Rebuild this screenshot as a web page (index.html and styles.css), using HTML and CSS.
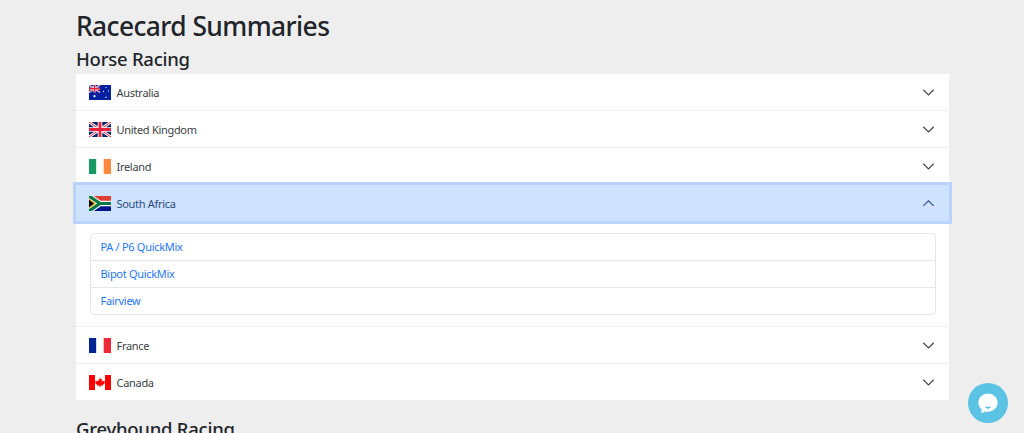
FILE: index.html
```html
<!DOCTYPE html>
<html lang="en">
<head>
<meta charset="utf-8">
<title>Racecard Summaries</title>
<link rel="stylesheet" href="styles.css">
</head>
<body>
<main class="container">
  <h1 class="title">Racecard Summaries</h1>
  <h2 class="section">Horse Racing</h2>
  <div class="accordion">
    <div class="item">
      <div class="head">
        <svg class="flag" viewBox="0 0 22 15" preserveAspectRatio="none"><rect width="22" height="15" fill="#00209f"/><path d="M0 0L11 7.500M11 0L0 7.500" stroke="#fff" stroke-width="1.500"/><path d="M0 0L11 7.500M11 0L0 7.500" stroke="#e0243c" stroke-width=".6"/><path d="M5.500 0V7.500M0 3.750H11" stroke="#fff" stroke-width="2.200"/><path d="M5.500 0V7.500M0 3.750H11" stroke="#e8203c" stroke-width="1.300"/><circle cx="5.500" cy="11.200" r="1.100" fill="#fff"/><circle cx="17" cy="2.500" r=".6" fill="#fff"/><circle cx="14.500" cy="6.300" r=".6" fill="#fff"/><circle cx="19.500" cy="5.800" r=".6" fill="#fff"/><circle cx="17" cy="12.300" r=".7" fill="#fff"/></svg>
        <span class="name">Australia</span>
        <svg class="chev" viewBox="0 0 16 16"><path d="M1.600 4.600L8 11l6.400-6.400"/></svg>
      </div>
    </div>
    <div class="item">
      <div class="head">
        <svg class="flag" viewBox="0 0 22 15" preserveAspectRatio="none"><rect width="22" height="15" fill="#012169"/><path d="M0 0L22 15M22 0L0 15" stroke="#fff" stroke-width="2.800"/><path d="M0 0L22 15M22 0L0 15" stroke="#e8203c" stroke-width="1"/><path d="M11 0V15M0 7.500H22" stroke="#fff" stroke-width="4.600"/><path d="M11 0V15M0 7.500H22" stroke="#e8203c" stroke-width="2.800"/></svg>
        <span class="name">United Kingdom</span>
        <svg class="chev" viewBox="0 0 16 16"><path d="M1.600 4.600L8 11l6.400-6.400"/></svg>
      </div>
    </div>
    <div class="item">
      <div class="head">
        <svg class="flag" viewBox="0 0 22 15" preserveAspectRatio="none"><rect width="7.400" height="15" fill="#169b62"/><rect x="7.400" width="7.300" height="15" fill="#fff"/><rect x="14.700" width="7.300" height="15" fill="#ff883e"/></svg>
        <span class="name">Ireland</span>
        <svg class="chev" viewBox="0 0 16 16"><path d="M1.600 4.600L8 11l6.400-6.400"/></svg>
      </div>
    </div>
    <div class="item">
      <div class="head active">
        <svg class="flag" viewBox="0 0 22 15" preserveAspectRatio="none"><rect width="22" height="7.500" fill="#e03c31"/><rect y="7.500" width="22" height="7.500" fill="#001489"/><path d="M0 0L11 7.500H22M0 15L11 7.500" stroke="#fff" stroke-width="5.400" fill="none"/><path d="M0 0L11 7.500H22M0 15L11 7.500" stroke="#007749" stroke-width="3.200" fill="none"/><path d="M0 2.400L7.200 7.500L0 12.600Z" fill="#ffb81c"/><path d="M0 3.800L5 7.500L0 11.200Z" fill="#000"/></svg>
        <span class="name">South Africa</span>
        <svg class="chev" viewBox="0 0 16 16"><path d="M1.600 11L8 4.600l6.400 6.400"/></svg>
      </div>
      <div class="body">
        <div class="links">
          <a class="link" href="#">PA / P6 QuickMix</a>
          <a class="link" href="#">Bipot QuickMix</a>
          <a class="link" href="#">Fairview</a>
        </div>
      </div>
    </div>
    <div class="item">
      <div class="head">
        <svg class="flag" viewBox="0 0 22 15" preserveAspectRatio="none"><rect width="7.400" height="15" fill="#002395"/><rect x="7.400" width="7.300" height="15" fill="#fff"/><rect x="14.700" width="7.300" height="15" fill="#ed2939"/></svg>
        <span class="name">France</span>
        <svg class="chev" viewBox="0 0 16 16"><path d="M1.600 4.600L8 11l6.400-6.400"/></svg>
      </div>
    </div>
    <div class="item">
      <div class="head">
        <svg class="flag" viewBox="0 0 22 15" preserveAspectRatio="none"><rect width="22" height="15" fill="#fff"/><rect width="6" height="15" fill="#f00"/><rect x="16" width="6" height="15" fill="#f00"/><path d="M11 2.500l1.100 2 1-.5-.4 2.700 1.400-1.300.4.900 1.400-.2-.5 1.500.6.300-2.500 2 .3.900-2.300-.3V12h-1v-1.500l-2.300.3.300-.9-2.500-2 .6-.3-.5-1.500 1.400.2.400-.9 1.400 1.300L8.900 5l1 .5z" fill="#f00"/></svg>
        <span class="name">Canada</span>
        <svg class="chev" viewBox="0 0 16 16"><path d="M1.600 4.600L8 11l6.400-6.400"/></svg>
      </div>
    </div>
  </div>
  <h2 class="section next">Greyhound Racing</h2>
</main>
<button class="chat" type="button" aria-label="Chat">
  <svg viewBox="0 0 24 24" width="24" height="24"><path d="M12 2.400c5.300 0 9.600 4 9.600 9.200 0 5.200-4.300 9.200-9.600 9.200-.9 0-1.800-.1-2.600-.3L5.200 22.200l.4-3.800C3.700 16.700 2.400 14.300 2.400 11.600 2.400 6.400 6.700 2.400 12 2.400z" fill="#fff"/><path d="M8.800 15.800h6.400c-.7 1.300-1.800 1.900-3.200 1.900s-2.500-.6-3.200-1.900z" fill="#5bc4e4"/></svg>
</button>
</body>
</html>
```

FILE: styles.css
```css
* { box-sizing: border-box; }
html, body { height: 100%; overflow: hidden; }
body {
  margin: 0;
  background: #eeeeee;
  color: #212529;
  font-family: "Noto Sans", "Open Sans", "Liberation Sans", sans-serif;
  font-size: 11px;
  letter-spacing: -0.3px;
}
.container { width: 873px; margin-left: 76px; padding-top: 10px; }
.title { margin: 0; font-size: 26.400px; line-height: 33px; font-weight: 500; letter-spacing: -0.6px; }
.section { margin: 0; font-size: 18.500px; line-height: 24px; font-weight: 500; height: 31px; padding-top: 4px; letter-spacing: -0.25px; }
.accordion { background: #fff; }
.item + .item { border-top: 1px solid #eeeeee; }
.head { display: flex; align-items: center; height: 36px; padding: 0 14px 0 13px; color: #3a3f44; }
.head.active {
  position: relative;
  background: #cfe2ff;
  color: #2a4a80;
  box-shadow: 0 0 0 3px #b9d3fa;
}
.flag { width: 22px; height: 15px; flex: none; }
.name { margin-left: 5.500px; flex: 1; }
.chev { width: 13px; height: 13px; flex: none; fill: none; stroke: #444; stroke-width: 1.400; }
.active .chev { stroke: #2c4f94; }
.body { padding: 12px 13.500px 11px; }
.links { border: 1px solid #e6e6e6; border-radius: 4px; display: flex; flex-direction: column; }
.link { height: 26px; line-height: 26px; padding-left: 10px; color: #1f75f5; text-decoration: none; }
.link + .link { height: 27px; border-top: 1px solid #e6e6e6; }
.next { margin-top: 13px; }
.chat {
  position: fixed;
  left: 968px;
  top: 383px;
  width: 40px;
  height: 40px;
  border: 0;
  padding: 0;
  border-radius: 50%;
  background: #5bc4e4;
  display: flex;
  align-items: center;
  justify-content: center;
}
```
